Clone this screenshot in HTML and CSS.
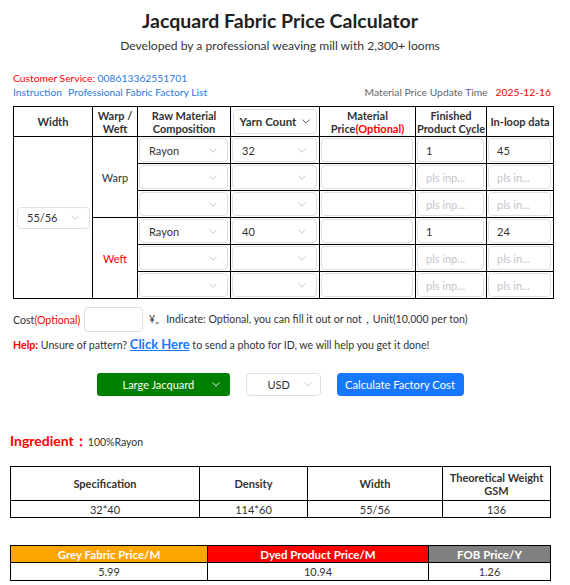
FILE: index.html
```html
<!DOCTYPE html>
<html lang="en">
<head>
<meta charset="utf-8">
<title>Jacquard Fabric Price Calculator</title>
<link rel="stylesheet" href="styles.css">
</head>
<body>
<div class="page">
  <h1 class="title">Jacquard Fabric Price Calculator</h1>
  <p class="subtitle">Developed by a professional weaving mill with 2,300+ looms</p>

  <div class="info">
    <div class="info-line"><span class="red">Customer Service:</span> <span class="blue">008613362551701</span></div>
    <div class="info-line split">
      <div class="links"><a class="blue">Instruction</a><a class="blue">Professional Fabric Factory List</a></div>
      <div class="update"><span class="gray">Material Price Update Time</span><span class="red">2025-12-16</span></div>
    </div>
  </div>

  <table class="calc">
    <colgroup>
      <col class="c1"><col class="c2"><col class="c3"><col class="c4"><col class="c5"><col class="c6"><col class="c7">
    </colgroup>
    <thead>
      <tr>
        <th>Width</th>
        <th>Warp /<br>Weft</th>
        <th>Raw Material<br>Composition</th>
        <th class="th-box"><div class="head-select">Yarn Count <svg class="chev dark" viewBox="0 0 8 5" width="8" height="5"><path d="M0.5 0.5L4 4.2L7.5 0.5"/></svg></div></th>
        <th>Material<br>Price<span class="red">(Optional)</span></th>
        <th>Finished<br>Product Cycle</th>
        <th>In-loop data</th>
      </tr>
    </thead>
    <tbody>
      <tr>
        <td rowspan="6" class="width-cell"><div class="box sel w-sel"><span>55/56</span><svg class="chev" viewBox="0 0 8 5" width="8" height="5"><path d="M0.5 0.5L4 4.2L7.5 0.5"/></svg></div></td>
        <td rowspan="3" class="side">Warp</td>
        <td><div class="box sel"><span>Rayon</span><svg class="chev" viewBox="0 0 8 5" width="8" height="5"><path d="M0.5 0.5L4 4.2L7.5 0.5"/></svg></div></td>
        <td><div class="box sel"><span>32</span><svg class="chev" viewBox="0 0 8 5" width="8" height="5"><path d="M0.5 0.5L4 4.2L7.5 0.5"/></svg></div></td>
        <td><div class="box"></div></td>
        <td><div class="box"><span>1</span></div></td>
        <td><div class="box"><span>45</span></div></td>
      </tr>
      <tr>
        <td><div class="box sel"><span></span><svg class="chev" viewBox="0 0 8 5" width="8" height="5"><path d="M0.5 0.5L4 4.2L7.5 0.5"/></svg></div></td>
        <td><div class="box sel"><span></span><svg class="chev" viewBox="0 0 8 5" width="8" height="5"><path d="M0.5 0.5L4 4.2L7.5 0.5"/></svg></div></td>
        <td><div class="box"></div></td>
        <td><div class="box"><span class="ph">pls inp...</span></div></td>
        <td><div class="box"><span class="ph">pls in...</span></div></td>
      </tr>
      <tr>
        <td><div class="box sel"><span></span><svg class="chev" viewBox="0 0 8 5" width="8" height="5"><path d="M0.5 0.5L4 4.2L7.5 0.5"/></svg></div></td>
        <td><div class="box sel"><span></span><svg class="chev" viewBox="0 0 8 5" width="8" height="5"><path d="M0.5 0.5L4 4.2L7.5 0.5"/></svg></div></td>
        <td><div class="box"></div></td>
        <td><div class="box"><span class="ph">pls inp...</span></div></td>
        <td><div class="box"><span class="ph">pls in...</span></div></td>
      </tr>
      <tr>
        <td rowspan="3" class="side red">Weft</td>
        <td><div class="box sel"><span>Rayon</span><svg class="chev" viewBox="0 0 8 5" width="8" height="5"><path d="M0.5 0.5L4 4.2L7.5 0.5"/></svg></div></td>
        <td><div class="box sel"><span>40</span><svg class="chev" viewBox="0 0 8 5" width="8" height="5"><path d="M0.5 0.5L4 4.2L7.5 0.5"/></svg></div></td>
        <td><div class="box"></div></td>
        <td><div class="box"><span>1</span></div></td>
        <td><div class="box"><span>24</span></div></td>
      </tr>
      <tr>
        <td><div class="box sel"><span></span><svg class="chev" viewBox="0 0 8 5" width="8" height="5"><path d="M0.5 0.5L4 4.2L7.5 0.5"/></svg></div></td>
        <td><div class="box sel"><span></span><svg class="chev" viewBox="0 0 8 5" width="8" height="5"><path d="M0.5 0.5L4 4.2L7.5 0.5"/></svg></div></td>
        <td><div class="box"></div></td>
        <td><div class="box"><span class="ph">pls inp...</span></div></td>
        <td><div class="box"><span class="ph">pls in...</span></div></td>
      </tr>
      <tr>
        <td><div class="box sel"><span></span><svg class="chev" viewBox="0 0 8 5" width="8" height="5"><path d="M0.5 0.5L4 4.2L7.5 0.5"/></svg></div></td>
        <td><div class="box sel"><span></span><svg class="chev" viewBox="0 0 8 5" width="8" height="5"><path d="M0.5 0.5L4 4.2L7.5 0.5"/></svg></div></td>
        <td><div class="box"></div></td>
        <td><div class="box"><span class="ph">pls inp...</span></div></td>
        <td><div class="box"><span class="ph">pls in...</span></div></td>
      </tr>
    </tbody>
  </table>

  <div class="cost-row">
    <span class="cost-label">Cost<span class="red">(Optional)</span></span>
    <div class="box cost-input"></div>
    <span class="cost-note">¥。Indicate: Optional, you can fill it out or not，Unit(10,000 per ton)</span>
  </div>

  <p class="help"><span class="help-label">Help:</span> Unsure of pattern? <a class="click">Click Here</a> to send a photo for ID, we will help you get it done!</p>

  <div class="actions">
    <div class="btn-green"><span>Large Jacquard</span><svg class="chev white" viewBox="0 0 8 5" width="8" height="5"><path d="M0.5 0.5L4 4.2L7.5 0.5"/></svg></div>
    <div class="btn-currency"><span>USD</span><svg class="chev" viewBox="0 0 8 5" width="8" height="5"><path d="M0.5 0.5L4 4.2L7.5 0.5"/></svg></div>
    <div class="btn-blue">Calculate Factory Cost</div>
  </div>

  <p class="ingredient"><span class="ing-label">Ingredient：</span><span class="ing-value">100%Rayon</span></p>

  <table class="result spec">
    <colgroup><col class="s1"><col class="s2"><col class="s3"><col class="s4"></colgroup>
    <thead>
      <tr><th>Specification</th><th>Density</th><th>Width</th><th>Theoretical Weight<br>GSM</th></tr>
    </thead>
    <tbody>
      <tr><td>32*40</td><td>114*60</td><td>55/56</td><td>136</td></tr>
    </tbody>
  </table>

  <table class="result price">
    <colgroup><col class="p1"><col class="p2"><col class="p3"></colgroup>
    <thead>
      <tr><th class="orange">Grey Fabric Price/M</th><th class="redbg">Dyed Product Price/M</th><th class="graybg">FOB Price/Y</th></tr>
    </thead>
    <tbody>
      <tr><td>5.99</td><td>10.94</td><td>1.26</td></tr>
    </tbody>
  </table>
</div>
</body>
</html>
```

FILE: styles.css
```css
* { box-sizing: border-box; }

html, body {
  margin: 0;
  padding: 0;
  background: #fff;
}

body {
  font-family: Lato, "Noto Sans", "Liberation Sans", sans-serif;
  font-size: 11px;
  color: #333;
}

.page {
  width: 560px;
  padding-top: 9px;
}

.title {
  margin: 0;
  font-size: 19.5px;
  line-height: 24px;
  font-weight: 700;
  color: #222;
  text-align: center;
}

.subtitle {
  margin: 5px 0 0;
  font-size: 12.1px;
  line-height: 16px;
  color: #333;
  text-align: center;
}

.red { color: #f00; }
.blue { color: #2a7ae2; text-decoration: none; }
.gray { color: #666; }

.info {
  margin: 17px 0 0 13px;
  width: 538px;
}

.info-line {
  line-height: 14px;
  font-size: 10.3px;
}

.split {
  display: flex;
  justify-content: space-between;
}

.links {
  display: flex;
  gap: 6px;
}

.update {
  display: flex;
  gap: 8px;
}

/* main calculator table */
.calc {
  margin: 7px 0 0 13px;
  width: 540px;
  table-layout: fixed;
  border-collapse: collapse;
}

.c1 { width: 79px; }
.c2 { width: 45px; }
.c3 { width: 93px; }
.c4 { width: 89px; }
.c5 { width: 96px; }
.c6 { width: 71px; }
.c7 { width: 67px; }

.calc th, .calc td {
  border: 1px solid #000;
}

.calc th {
  height: 30px;
  padding: 0;
  font-size: 11px;
  line-height: 13px;
  font-weight: 700;
  color: #333;
  text-align: center;
  vertical-align: middle;
}

.calc th.th-box {
  padding: 1px 2px 2px 2px;
}

.head-select {
  height: 25px;
  border: 1px solid #dcdfe6;
  border-radius: 4px;
  display: flex;
  align-items: center;
  justify-content: center;
  gap: 6px;
  font-size: 11.5px;
}

.calc td {
  height: 27px;
  padding: 1px 2px 1px 1px;
  vertical-align: middle;
}

.calc td.side {
  padding: 0;
  text-align: center;
  font-size: 11px;
}

.calc td.width-cell {
  padding: 0 3px;
}

.box {
  height: 24px;
  border: 1px solid #dcdfe6;
  border-radius: 4px;
  display: flex;
  align-items: center;
  padding: 0 8px;
  font-size: 11px;
  color: #333;
  background: #fff;
  overflow: hidden;
  white-space: nowrap;
}

.box.sel {
  justify-content: space-between;
  padding: 0 10px 0 9px;
}

.w-sel {
  width: 73px;
  height: 22px;
}

.ph { color: #c0c4cc; }

.chev {
  flex: none;
  display: block;
}

.chev path {
  fill: none;
  stroke: #c0c4cc;
  stroke-width: 0.9;
}

.chev.dark path { stroke: #555; }
.chev.white path { stroke: #fff; }

/* cost row */
.cost-row {
  margin: 8px 0 0 13px;
  height: 25px;
  display: flex;
  align-items: center;
  font-size: 10.6px;
}

.cost-label { width: 71px; }

.cost-input {
  width: 59px;
  height: 25px;
  margin-right: 6px;
}

.help {
  margin: 5px 0 0 13px;
  line-height: 14px;
  font-size: 10.6px;
}

.help-label {
  color: #f00;
  font-weight: 700;
}

.click {
  color: #1677ff;
  font-weight: 700;
  font-size: 13px;
  text-decoration: underline;
}

/* actions */
.actions {
  margin-top: 21px;
  display: flex;
  justify-content: center;
  align-items: center;
  gap: 16px;
}

.btn-green {
  width: 133px;
  height: 23px;
  background: #008000;
  border-radius: 3px;
  color: #fff;
  display: flex;
  align-items: center;
  padding: 0 10px 0 26px;
  justify-content: space-between;
  font-size: 11px;
}

.btn-currency {
  width: 75px;
  height: 23px;
  border: 1px solid #dcdfe6;
  border-radius: 4px;
  display: flex;
  align-items: center;
  justify-content: space-between;
  padding: 0 8px 0 21px;
  font-size: 11px;
  color: #333;
}

.btn-blue {
  width: 127px;
  height: 23px;
  background: #1677ff;
  border-radius: 4px;
  color: #fff;
  display: flex;
  align-items: center;
  justify-content: center;
  font-size: 11.2px;
}

/* ingredient */
.ingredient {
  margin: 36px 0 0 10px;
  line-height: 18px;
  display: flex;
  align-items: baseline;
}

.ing-label {
  color: #f00;
  font-weight: 700;
  font-size: 14px;
}

.ing-value {
  font-size: 10.5px;
  color: #333;
}

/* result tables */
.result {
  margin-left: 10px;
  width: 540px;
  table-layout: fixed;
  border-collapse: collapse;
}

.result th, .result td {
  border: 1px solid #000;
  padding: 0;
  text-align: center;
  vertical-align: middle;
  font-size: 11px;
  line-height: 13px;
  color: #333;
}

.result th { font-weight: 700; }

.spec { margin-top: 15px; }
.spec th { height: 34px; }
.spec td { height: 17px; }

.s1 { width: 189px; }
.s2 { width: 108px; }
.s3 { width: 135px; }
.s4 { width: 108px; }

.price { margin-top: 27px; }
.price th { height: 17px; color: #fff; font-size: 11.5px; }
.price td { height: 18px; }

.p1 { width: 197px; }
.p2 { width: 221px; }
.p3 { width: 122px; }

.orange { background: #ffa500; }
.redbg { background: #f00; }
.graybg { background: #808080; }
```
